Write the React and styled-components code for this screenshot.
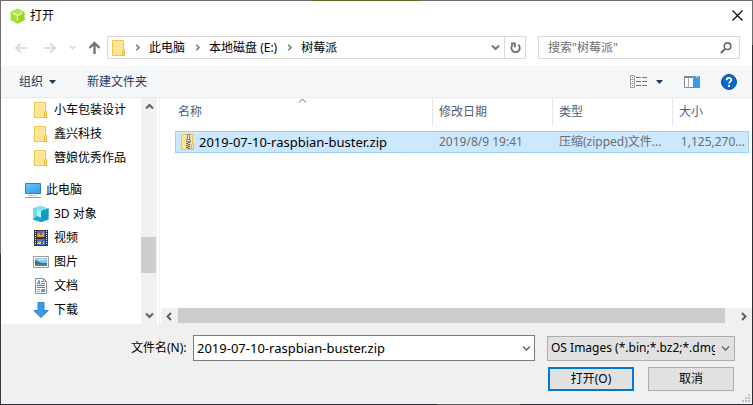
import React from "react";
import styled, { createGlobalStyle, css } from "styled-components";

const GlobalStyle = createGlobalStyle`
  *, *::before, *::after { box-sizing: border-box; }
  body { margin: 0; }
  body, button, input, select {
    font-family: "Noto Sans", "Noto Sans CJK SC", sans-serif;
    font-size: 12px;
    line-height: 18px;
    color: #000;
  }
  button, input, select { margin: 0; padding: 0; border: 0; border-radius: 0; background: none; outline: 0; }
  svg { display: block; flex: none; }
`;

const Desktop = styled.div`
  display: flex;
  min-height: 100vh;
  padding: 1px;
  background:
    linear-gradient(90deg, #6f6c6f 311px, #5b6d22 311px, #5b6d22 420px, #6f6c6f 420px) top / 100% 1px no-repeat,
    linear-gradient(#706e70 254px, #38353c 254px) left / 1px 100% no-repeat,
    linear-gradient(#706e70 45px, #2d2d31 45px) right / 1px 100% no-repeat,
    linear-gradient(90deg, #2f2d31 437px, #5f5f5e 437px, #5f5f5e 520px, #2f2d31 520px) bottom / 100% 1px no-repeat;
`;

const Dialog = styled.main`
  flex: 1;
  min-width: 0;
  display: flex;
  flex-direction: column;
  background: #fff;
`;

const TitleBar = styled.header`
  display: flex;
  align-items: center;
  gap: 5px;
  height: 29px;
  padding: 0 8px 0 9px;
`;

const Title = styled.h1`
  flex: 1;
  margin: 0;
  font-size: 12px;
  font-weight: 400;
`;

const IconButton = styled.button`
  display: flex;
  align-items: center;
  justify-content: center;
  flex: none;
  width: ${(p) => p.$width || 14}px;
  height: 21px;
`;

const NavBar = styled.nav`
  display: flex;
  align-items: center;
  gap: 12px;
  padding: 6px 12px 7px 12px;
`;

const NavButtons = styled.div`
  display: flex;
  align-items: center;
`;

const ForwardGroup = styled.div`
  display: flex;
  align-items: center;
  gap: 8px;
  margin-left: 16px;
`;

const AddressBox = styled.div`
  flex: 1;
  min-width: 0;
  display: flex;
  align-items: center;
  height: 23px;
  margin-left: -6px;
  padding-left: 4px;
  border: 1px solid #d9d9d9;
`;

const Crumbs = styled.ol`
  flex: 1;
  display: flex;
  margin: 0;
  padding: 0 0 0 8px;
  list-style: none;
`;

const Crumb = styled.li`
  display: flex;
  align-items: center;
  gap: 8px;
  margin-right: 9px;
`;

const CrumbLink = styled.a`
  color: #000;
  text-decoration: none;
  white-space: nowrap;
`;

const RefreshCell = styled.div`
  margin-left: 2px;
  border-left: 1px solid #d9d9d9;
`;

const SearchBox = styled.label`
  display: flex;
  align-items: center;
  flex: none;
  width: 27%;
  min-width: 202px;
  height: 23px;
  padding: 0 7px 0 9px;
  border: 1px solid #d9d9d9;
`;

const SearchInput = styled.input`
  flex: 1;
  min-width: 0;
  &::placeholder { color: #6d6d6d; opacity: 1; }
`;

const Toolbar = styled.div`
  display: flex;
  align-items: center;
  height: 32px;
  padding: 0 15px 0 18px;
  background: #f5f6f7;
  border-bottom: 1px solid #e8e9eb;
`;

const ToolButton = styled.button`
  display: flex;
  align-items: center;
  gap: ${(p) => p.$gap || 6}px;
  color: #1e395b;
`;

const ToolGroup = styled.div`
  flex: 1;
  display: flex;
  gap: 31px;
`;

const ToolIcons = styled.div`
  display: flex;
  align-items: center;
  gap: 21px;
`;

const Content = styled.div`
  flex: 1;
  display: flex;
  min-height: 0;
`;

const Sidebar = styled.aside`
  flex: none;
  display: flex;
  width: 159px;
  padding-right: 2px;
  border-right: 1px solid #f0f0f0;
`;

const Tree = styled.ul`
  flex: 1;
  margin: 0;
  padding: 0;
  list-style: none;
`;

const TreeItem = styled.li`
  display: flex;
  align-items: center;
  gap: 5px;
  height: 24px;
  margin-top: ${(p) => (p.$root ? 8 : 0)}px;
  padding-left: ${(p) => (p.$root ? 23 : 31)}px;
  white-space: nowrap;
`;

const ScrollTrack = styled.div`
  flex: none;
  display: grid;
  background: #f0f0f0;
  ${(p) =>
    p.$horizontal
      ? css`
          height: 16px;
          grid-template-columns: 17px 1fr 17px;
        `
      : css`
          width: 16px;
          grid-template-rows: 17px 1fr 17px;
        `}
`;

const ScrollRange = styled.div`
  display: grid;
  ${(p) =>
    p.$horizontal
      ? css`grid-template-columns: 0 1fr 10px; padding-bottom: 1px;`
      : css`grid-template-rows: 122fr 36fr 34fr; padding-right: 1px;`}
`;

const ScrollThumb = styled.div`
  background: #cdcdcd;
  ${(p) => (p.$horizontal ? "grid-column: 2;" : "grid-row: 2;")}
`;

const ScrollButton = styled.button`
  display: flex;
  align-items: center;
  justify-content: center;
`;

const FilePane = styled.section`
  flex: 1;
  min-width: 0;
  display: flex;
  flex-direction: column;
  padding-left: 1px;
`;

const FileArea = styled.div`
  flex: 1;
  padding: 0 3px 0 14px;
`;

const FileTable = styled.table`
  width: 100%;
  table-layout: fixed;
  border-spacing: 0;
`;

const HeadCell = styled.th`
  width: ${(p) => p.$width || "auto"};
  padding: 0 0 5px;
  font-weight: 400;
  text-align: left;
`;

const HeadLabel = styled.div`
  position: relative;
  height: 28px;
  padding: 5px 0 0 ${(p) => (p.$first ? 3 : 6)}px;
  border-left: ${(p) => (p.$first ? "0" : "1px solid #e5e5e5")};
  color: #4c607a;
`;

const SortMark = styled.span`
  position: absolute;
  top: -2px;
  left: calc(50% - 6px);
`;

const Cell = styled.td`
  height: 22px;
  padding: 0 3px 0 ${(p) => (p.$first ? 5 : 7)}px;
  overflow: hidden;
  text-overflow: ellipsis;
  white-space: nowrap;
  text-align: ${(p) => (p.$right ? "right" : "left")};
  color: #6d6d6d;
  background: #cce8ff;
  border: solid #99d1ff;
  border-width: 1px 0;
  &:first-child { border-left-width: 1px; }
  &:last-child { border-right-width: 1px; }
`;

const FileName = styled.div`
  display: flex;
  align-items: center;
  gap: 4px;
  font-size: 13px;
  color: #000;
`;

const Footer = styled.form`
  display: flex;
  flex-direction: column;
  gap: 6px;
  padding: 11px 17px 13px 130px;
  background: #f0f0f0;
  position: relative;
`;

const FooterRow = styled.div`
  display: flex;
  align-items: center;
  justify-content: flex-end;
`;

const FieldLabel = styled.label`
  flex: none;
  width: 62px;
`;

const Combo = styled.div`
  flex: 1;
  min-width: 0;
  display: flex;
  align-items: center;
  height: 26px;
  padding: 0 1px 0 3px;
  background: #fff;
  border: 1px solid #7a7a7a;
`;

const ComboInput = styled.input`
  flex: 1;
  min-width: 0;
  font-size: 13px;
`;

const SelectBox = styled.div`
  flex: none;
  display: flex;
  align-items: center;
  width: 188px;
  height: 25px;
  margin-left: 12px;
  padding: 0 4px 0 3px;
  background: #e1e1e1;
  border: 1px solid #adadad;
`;

const TypeSelect = styled.select`
  flex: 1;
  min-width: 0;
  height: 23px;
  appearance: none;
  margin-right: 6px;
  overflow: hidden;
`;

const DialogButton = styled.button`
  width: 86px;
  height: 24px;
  margin: 0 1px 0 13px;
  background: #e1e1e1;
  border: ${(p) => (p.$primary ? "2px solid #0078d7" : "1px solid #adadad")};
`;

const Grip = styled.div`
  position: absolute;
  right: 2px;
  bottom: 2px;
`;

const chevronPaths = {
  up: "M1 6.5 4.5 3 8 6.5",
  down: "M1 2.5 4.5 6 8 2.5",
  left: "M6 1 2.5 4.5 6 8",
  right: "M3 1 6.5 4.5 3 8",
};

const Chevron = ({ dir = "down", color = "#606060", weight = 2, size = 9 }) => (
  <svg width={size} height={size} viewBox="0 0 9 9" fill="none" stroke={color} strokeWidth={weight}>
    <path d={chevronPaths[dir]} />
  </svg>
);

const Arrow = ({ dir, color }) => (
  <svg width="13" height="14" viewBox="0 0 13 14" fill="none" stroke={color} strokeWidth="2">
    {dir === "left" && <path d="M13 7H2M6.5 2.5 2 7l4.5 4.5" />}
    {dir === "right" && <path d="M0 7h11M6.5 2.5 11 7l-4.5 4.5" />}
    {dir === "up" && <path strokeWidth="2.4" d="M6.5 13V2M1.5 7l5-5 5 5" />}
  </svg>
);

const Triangle = () => (
  <svg width="7" height="4" viewBox="0 0 7 4"><path d="M0 0h7L3.5 4z" fill="#1e395b" /></svg>
);

const AppLogo = () => (
  <svg width="15" height="16" viewBox="0 0 15 16">
    <path d="M7.5.5 14.5 4v8l-7 3.7L.5 12V4z" fill="#a5de37" />
    <path d="M7.5.5 14.5 4l-7 3.5L.5 4z" fill="#b4e74a" />
    <path d="M7.5 7.5 14.5 4v8l-7 3.7z" fill="#98d52b" />
    <path d="M2.8 5 7.5 7.5 12.2 5M7.5 7.5v5.2" stroke="#f0ffc9" strokeWidth="1.2" fill="none" />
  </svg>
);

const Folder = ({ zip }) => (
  <svg width="14" height="16" viewBox="0 0 14 16">
    <path d="M.5.5h11v9h1v6H.5z" fill="#ffe596" stroke="#edc64d" />
    <path d="M10.5 15.5v-5l1-1h1v6z" fill="#fbe08b" stroke="#e8b93c" />
    {zip && (
      <g>
        <path d="M5 1h5v14H5z" fill="#e8d58e" />
        <path d="M6 0h3v5l1 1v2H5V6l1-1z" fill="#8c8c8c" />
        <path d="M7 1h1v4H7z" fill="#e8e8e8" />
        <path d="M6 6h3v1H6z" fill="#dedede" />
        <path d="M7 8h2v1H7zM5 9h2v1H5zM7 10h2v1H7zM5 11h2v1H5zM7 12h2v1H7zM5 13h2v1H5zM7 14h2v1H7z" fill="#5f6268" />
      </g>
    )}
  </svg>
);

const Monitor = () => (
  <svg width="17" height="16" viewBox="0 0 17 16">
    <defs>
      <linearGradient id="screen" x2="1" y2="1">
        <stop stopColor="#77cbff" /><stop offset=".5" stopColor="#46b0f7" /><stop offset="1" stopColor="#2f9cea" />
      </linearGradient>
    </defs>
    <path d="M1.5 1.5h15v10h-15z" fill="url(#screen)" stroke="#3e7a9c" />
    <path d="M4 13.5h9" stroke="#a9d5ec" />
    <path d="M1 15.5h16" stroke="#8fa0ac" />
  </svg>
);

const Cube = () => (
  <svg width="17" height="16" viewBox="0 0 17 16">
    <path d="M1 2.5 8 0l8.500 2.500v11L9 16l-8-2.500z" fill="#25b5d6" />
    <path d="M1 2.500 8 0l8.500 2.500L9 5z" fill="#7fe3f2" />
    <path d="M1 2.500 9 5v11l-8-2.500z" fill="#6edcec" />
    <path d="M9 5l7.500-2.500v11L9 16z" fill="#129bc0" />
    <path d="M1 13.500 5 10l4 1.500V16z" fill="#1aa4c8" />
    <path d="M5 3.800V10l4 1.500V5z" fill="#b4f0f7" />
  </svg>
);

const Film = () => (
  <svg width="15" height="16" viewBox="0 0 15 16">
    <path d="M1 0h14v16H1z" fill="#333840" />
    <path d="M2.500 1v14M13.500 1v14" stroke="#f2f2f2" strokeWidth="1" strokeDasharray="1 1" />
    <path d="M4 1h8v6H4zM4 9h8v6H4z" fill="#3978d8" />
    <path d="M4 5l2-2 2 1 3-2v5H4z" fill="#e2a52c" />
    <path d="M7 2h2v3H7z" fill="#cc3d36" />
    <path d="M4 13l3-2 4 1v2H4z" fill="#e6c838" />
    <path d="M8 11h2v3H8z" fill="#a34a3c" />
  </svg>
);

const Picture = () => (
  <svg width="16" height="12" viewBox="0 0 16 12">
    <path d="M.5.5h15v11H.5z" fill="#fff" stroke="#9b9b9b" />
    <path d="M2 2h12v8H2z" fill="#8cc8ee" />
    <path d="M5 3h7v1H5z" fill="#d8effa" />
    <path d="M2 4l4 2 3 1h5v1H2z" fill="#3f765e" />
    <path d="M2 8h12v2H2z" fill="#507f99" />
  </svg>
);

const Document = () => (
  <svg width="12" height="16" viewBox="0 0 12 16">
    <path d="M.5.5h8l3 3v12H.5z" fill="#fff" stroke="#8f8f8f" />
    <path d="M8.5.5v3h3" fill="none" stroke="#8f8f8f" />
    <path d="M2 6.5 4 2.5l1 4M3 5h2M6 3.5h2M6 5.5h4M2 7.5h8M2 9.5h8" fill="none" stroke="#2a8edb" />
    <path d="M2 11.5h3M2 13.5h3" stroke="#9ba3a8" />
    <path d="M6 11h4v3H6z" fill="#5b9bc5" />
  </svg>
);

const Download = () => (
  <svg width="16" height="16" viewBox="0 0 16 16">
    <path d="M5 .5h6v8h4.2L8 15.5.8 8.5H5z" fill="#379bec" stroke="#2883d0" />
  </svg>
);

const Refresh = () => (
  <svg width="11" height="12" viewBox="0 0 11 12" fill="none" stroke="#6f6f6f" strokeWidth="1.8">
    <path d="M8.300 2.800A4.200 4.200 0 1 1 2.600 3M1 1.500h3.800V5.500" />
  </svg>
);

const Search = () => (
  <svg width="12" height="12" viewBox="0 0 12 12" fill="none" stroke="#686868">
    <circle cx="7.5" cy="4.2" r="3.3" strokeWidth="1.6" />
    <path d="M5.2 6.8.8 11" strokeWidth="2" />
  </svg>
);

const ViewList = () => (
  <svg width="17" height="13" viewBox="0 0 17 13">
    <path d="M.5.5h4v12h-4zM.5 4.5h4M.5 8.5h4" fill="#fff" stroke="#a0a0a0" />
    <path d="M2 2h1v1H2z" fill="#3b8f70" /><path d="M2 6h1v1H2z" fill="#2684df" /><path d="M2 10h1v1H2z" fill="#d22c2c" />
    <path d="M6 2.5h11M6 6.5h11M6 10.5h11" stroke="#777" strokeDasharray="5 1" />
  </svg>
);

const Preview = () => (
  <svg width="16" height="12" viewBox="0 0 16 12">
    <path d="M.5.5h15v11H.5z" fill="#fff" stroke="#7f8990" />
    <path d="M0 0h16v2H0z" fill="#7f8990" /><path d="M12 1h1M14 1h1" stroke="#fff" />
    <path d="M4.5 2v10" stroke="#a6abb0" /><path d="M9 2h6v9H9z" fill="#3c9be6" />
  </svg>
);

const Help = () => (
  <svg width="16" height="16" viewBox="0 0 16 16">
    <circle cx="8" cy="8" r="7.5" fill="#0b69cb" stroke="#084f9b" />
    <path d="M5.7 6.2C5.7 3.2 10.4 3.3 10.3 6c0 1.6-2.2 1.7-2.2 3.5" fill="none" stroke="#fff" strokeWidth="1.8" />
    <path d="M7 11h2v2H7z" fill="#fff" />
  </svg>
);

const places = [
  { name: "小车包装设计", icon: <Folder /> },
  { name: "鑫兴科技", icon: <Folder /> },
  { name: "簪娘优秀作品", icon: <Folder /> },
  { name: "此电脑", icon: <Monitor />, root: true },
  { name: "3D 对象", icon: <Cube /> },
  { name: "视频", icon: <Film /> },
  { name: "图片", icon: <Picture /> },
  { name: "文档", icon: <Document /> },
  { name: "下载", icon: <Download /> },
];

const IconSlot = styled.span`
  display: flex;
  justify-content: center;
  width: 17px;
`;

const crumbs = ["此电脑", "本地磁盘 (E:)", "树莓派"];

const columns = [
  { name: "名称" },
  { name: "修改日期", width: "120px" },
  { name: "类型", width: "120px" },
  { name: "大小", width: "77px" },
];

const Scrollbar = ({ horizontal }) => (
  <ScrollTrack $horizontal={horizontal}>
    <ScrollButton type="button" aria-label={horizontal ? "向左滚动" : "向上滚动"}>
      <Chevron dir={horizontal ? "left" : "up"} />
    </ScrollButton>
    <ScrollRange $horizontal={horizontal}>
      <ScrollThumb $horizontal={horizontal} />
    </ScrollRange>
    <ScrollButton type="button" aria-label={horizontal ? "向右滚动" : "向下滚动"}>
      <Chevron dir={horizontal ? "right" : "down"} />
    </ScrollButton>
  </ScrollTrack>
);

export default function App() {
  return (
    <Desktop>
      <GlobalStyle />
      <Dialog>
        <TitleBar>
          <AppLogo />
          <Title>打开</Title>
          <IconButton type="button" aria-label="关闭">
            <svg width="11" height="11" viewBox="0 0 11 11" stroke="#000" strokeWidth="1.1">
              <path d="M.5.5l10 10M10.5.5l-10 10" />
            </svg>
          </IconButton>
        </TitleBar>

        <NavBar>
          <NavButtons>
            <IconButton type="button" aria-label="后退"><Arrow dir="left" color="#dcdcdc" /></IconButton>
            <ForwardGroup>
              <IconButton type="button" aria-label="前进"><Arrow dir="right" color="#dcdcdc" /></IconButton>
              <IconButton type="button" aria-label="最近位置"><Chevron size={7} color="#d4d4d4" /></IconButton>
              <IconButton type="button" aria-label="上移"><Arrow dir="up" color="#757575" /></IconButton>
            </ForwardGroup>
          </NavButtons>
          <AddressBox>
            <Folder />
            <Crumbs>
              {crumbs.map((c) => (
                <Crumb key={c}>
                  <Chevron dir="right" size={7} color="#777" />
                  <CrumbLink href="#">{c}</CrumbLink>
                </Crumb>
              ))}
            </Crumbs>
            <IconButton type="button" aria-label="以前的位置"><Chevron color="#777" /></IconButton>
            <RefreshCell>
              <IconButton type="button" aria-label="刷新" $width={20}><Refresh /></IconButton>
            </RefreshCell>
          </AddressBox>
          <SearchBox>
            <SearchInput type="text" aria-label="搜索" placeholder={'搜索"树莓派"'} />
            <Search />
          </SearchBox>
        </NavBar>

        <Toolbar>
          <ToolGroup>
            <ToolButton type="button">组织<Triangle /></ToolButton>
            <ToolButton type="button">新建文件夹</ToolButton>
          </ToolGroup>
          <ToolIcons>
            <ToolButton type="button" aria-label="更改视图" $gap={9}><ViewList /><Triangle /></ToolButton>
            <ToolButton type="button" aria-label="预览窗格"><Preview /></ToolButton>
            <ToolButton type="button" aria-label="帮助"><Help /></ToolButton>
          </ToolIcons>
        </Toolbar>

        <Content>
          <Sidebar>
            <Tree>
              {places.map((p) => (
                <TreeItem key={p.name} $root={p.root}>
                  <IconSlot>{p.icon}</IconSlot>
                  {p.name}
                </TreeItem>
              ))}
            </Tree>
            <Scrollbar />
          </Sidebar>
          <FilePane>
            <FileArea>
              <FileTable>
                <thead>
                  <tr>
                    {columns.map((c, i) => (
                      <HeadCell key={c.name} $width={c.width}>
                        <HeadLabel $first={i === 0}>
                          {c.name}
                          {i === 0 && <SortMark><Chevron dir="up" weight={1} /></SortMark>}
                        </HeadLabel>
                      </HeadCell>
                    ))}
                  </tr>
                </thead>
                <tbody>
                  <tr>
                    <Cell $first><FileName><Folder zip />2019-07-10-raspbian-buster.zip</FileName></Cell>
                    <Cell>2019/8/9 19:41</Cell>
                    <Cell>压缩(zipped)文件...</Cell>
                    <Cell $right>1,125,270...</Cell>
                  </tr>
                </tbody>
              </FileTable>
            </FileArea>
            <Scrollbar horizontal />
          </FilePane>
        </Content>

        <Footer onSubmit={(e) => e.preventDefault()}>
          <FooterRow>
            <FieldLabel htmlFor="file-name">文件名(N):</FieldLabel>
            <Combo>
              <ComboInput id="file-name" type="text" defaultValue="2019-07-10-raspbian-buster.zip" />
              <IconButton type="button" aria-label="文件名列表"><Chevron weight={1.3} /></IconButton>
            </Combo>
            <SelectBox>
              <TypeSelect aria-label="文件类型">
                <option>OS Images (*.bin;*.bz2;*.dmg;*.dsk)</option>
              </TypeSelect>
              <Chevron weight={1.3} />
            </SelectBox>
          </FooterRow>
          <FooterRow>
            <DialogButton type="submit" $primary>打开(O)</DialogButton>
            <DialogButton type="button">取消</DialogButton>
          </FooterRow>
          <Grip>
            <svg width="8" height="8" viewBox="0 0 8 8" fill="#bfbfbf">
              <path d="M6 0h2v2H6zM3 3h2v2H3zM6 3h2v2H6zM0 6h2v2H0zM3 6h2v2H3zM6 6h2v2H6z" />
            </svg>
          </Grip>
        </Footer>
      </Dialog>
    </Desktop>
  );
}
